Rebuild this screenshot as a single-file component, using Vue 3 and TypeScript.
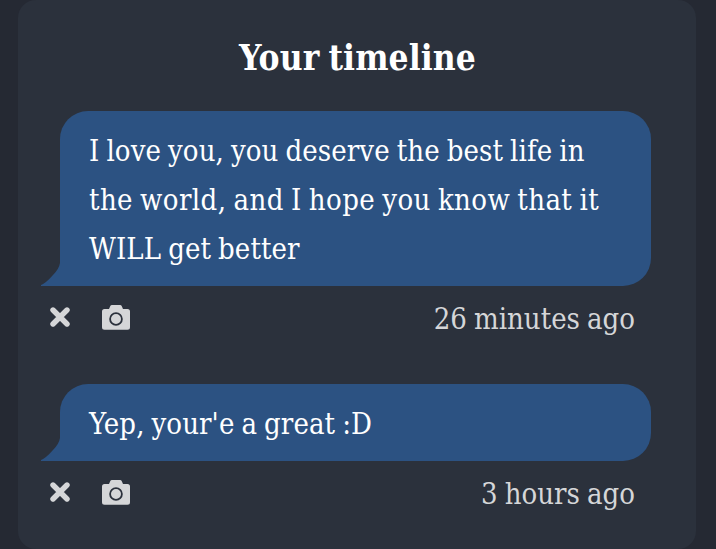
<script setup lang="ts">
interface Post {
  id: number
  lines: string[]
  time: string
}

const posts: Post[] = [
  {
    id: 1,
    lines: ['I love you, you deserve the best life in', 'the world, and I hope you know that it', 'WILL get better'],
    time: '26 minutes ago',
  },
  { id: 2, lines: ["Yep, your'e a great :D"], time: '3 hours ago' },
]
</script>

<template>
  <main class="page">
    <section class="card">
      <h1 class="title">Your timeline</h1>
      <article v-for="post in posts" :key="post.id" class="post">
        <div class="bubble">
          <svg class="tail" viewBox="0 0 21 23" aria-hidden="true">
            <path d="M21 0H20Q19 6 13 12Q6 20 1 22V23H21Z" fill="#2c5282" />
          </svg>
          <p v-for="(line, i) in post.lines" :key="i" class="line" :class="`line-${i + 1}`">{{ line }}</p>
        </div>
        <footer class="meta">
          <div class="actions">
            <svg class="cross" viewBox="0 0 20 20" aria-label="Delete">
              <path d="M3 3L17 17M17 3L3 17" stroke="#d5d6d8" stroke-width="5.4" stroke-linecap="round" />
            </svg>
            <svg class="camera" viewBox="0 0 28 25" aria-label="Screenshot">
              <path d="M2.5 4H7L8.2 1.2Q8.7 0 10 0H18Q19.3 0 19.8 1.2L21 4H25.5Q28 4 28 6.5V22.3Q28 24.8 25.5 24.8H2.5Q0 24.8 0 22.3V6.5Q0 4 2.5 4Z" fill="#d5d6d8" />
              <circle cx="14" cy="14" r="5.9" fill="none" stroke="#2b313c" stroke-width="1.8" />
            </svg>
          </div>
          <time class="time">{{ post.time }}</time>
        </footer>
      </article>
    </section>
  </main>
</template>

<style>
body {
  background: #252933;
}
</style>

<style scoped>
.page {
  box-sizing: border-box;
  height: 549px;
  padding: 0 20px 0 18px;
  overflow: hidden;
  background: #252933;
  color: #fff;
  font-family: "DejaVu Serif Condensed", "DejaVu Serif", serif;
  font-stretch: condensed;
}
.card {
  box-sizing: border-box;
  height: 549px;
  padding: 34px 45px 0 42px;
  border-radius: 18px;
  background: #2b313c;
}
.title {
  margin: 0 0 29px;
  padding-left: 4px;
  font-size: 35px;
  line-height: 48px;
  font-weight: 700;
  text-align: center;
  white-space: nowrap;
  letter-spacing: 0.1px;
  word-spacing: -2px;
}
.post {
  margin-bottom: 35px;
}
.bubble {
  position: relative;
  padding: 16px 29px 12px;
  border-radius: 28px 28px 28px 0;
  background: #2c5282;
}
.tail {
  position: absolute;
  left: -20px;
  bottom: 0;
  width: 21px;
  height: 23px;
}
.line {
  margin: 0;
  font-size: 29px;
  line-height: 49px;
  white-space: nowrap;
  letter-spacing: 0.1px;
  word-spacing: -1.4px;
}
.line-2 {
  letter-spacing: 0.4px;
  word-spacing: -1.5px;
}
.meta {
  display: flex;
  align-items: center;
  justify-content: space-between;
  height: 63px;
  padding-right: 16px;
}
.actions {
  display: flex;
  align-items: center;
  gap: 32px;
  margin-left: -10px;
}
.cross {
  width: 20px;
  height: 20px;
  margin-bottom: 2px;
}
.camera {
  width: 28px;
  height: 25px;
}
.time {
  padding-top: 4px;
  color: #d5d6d8;
  font-size: 29px;
  line-height: 49px;
  word-spacing: -1.2px;
  white-space: nowrap;
}
</style>
